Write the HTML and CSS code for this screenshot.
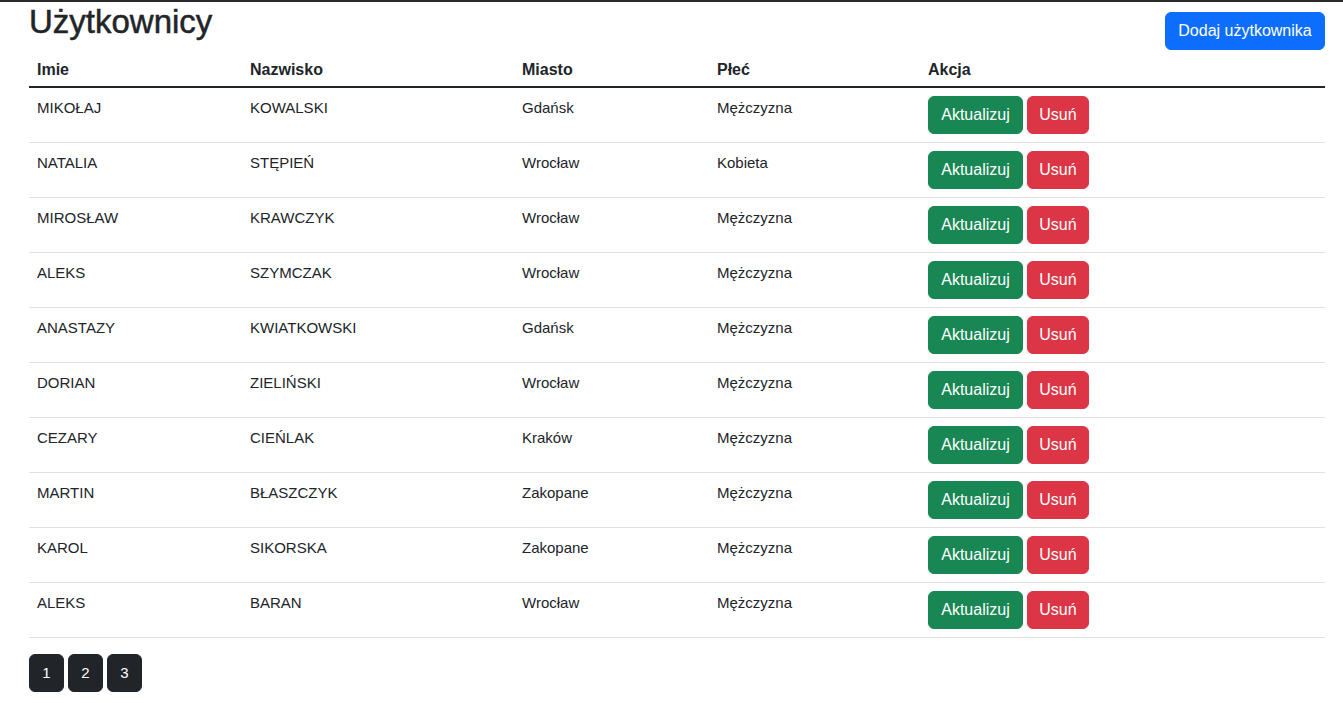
FILE: index.html
```html
<!DOCTYPE html>
<html lang="pl">
<head>
<meta charset="utf-8">
<title>Użytkownicy</title>
<link rel="stylesheet" href="styles.css">
</head>
<body>
<div class="page">
  <div class="header">
    <h1 class="title">Użytkownicy</h1>
    <button class="btn btn-primary btn-add">Dodaj użytkownika</button>
  </div>
  <table class="users">
    <colgroup>
      <col class="c1"><col class="c2"><col class="c3"><col class="c4"><col class="c5">
    </colgroup>
    <thead>
      <tr><th>Imie</th><th>Nazwisko</th><th>Miasto</th><th>Płeć</th><th>Akcja</th></tr>
    </thead>
    <tbody>
      <tr><td>MIKOŁAJ</td><td>KOWALSKI</td><td>Gdańsk</td><td>Mężczyzna</td><td><div class="actions"><button class="btn btn-success">Aktualizuj</button><button class="btn btn-danger">Usuń</button></div></td></tr>
      <tr><td>NATALIA</td><td>STĘPIEŃ</td><td>Wrocław</td><td>Kobieta</td><td><div class="actions"><button class="btn btn-success">Aktualizuj</button><button class="btn btn-danger">Usuń</button></div></td></tr>
      <tr><td>MIROSŁAW</td><td>KRAWCZYK</td><td>Wrocław</td><td>Mężczyzna</td><td><div class="actions"><button class="btn btn-success">Aktualizuj</button><button class="btn btn-danger">Usuń</button></div></td></tr>
      <tr><td>ALEKS</td><td>SZYMCZAK</td><td>Wrocław</td><td>Mężczyzna</td><td><div class="actions"><button class="btn btn-success">Aktualizuj</button><button class="btn btn-danger">Usuń</button></div></td></tr>
      <tr><td>ANASTAZY</td><td>KWIATKOWSKI</td><td>Gdańsk</td><td>Mężczyzna</td><td><div class="actions"><button class="btn btn-success">Aktualizuj</button><button class="btn btn-danger">Usuń</button></div></td></tr>
      <tr><td>DORIAN</td><td>ZIELIŃSKI</td><td>Wrocław</td><td>Mężczyzna</td><td><div class="actions"><button class="btn btn-success">Aktualizuj</button><button class="btn btn-danger">Usuń</button></div></td></tr>
      <tr><td>CEZARY</td><td>CIEŃLAK</td><td>Kraków</td><td>Mężczyzna</td><td><div class="actions"><button class="btn btn-success">Aktualizuj</button><button class="btn btn-danger">Usuń</button></div></td></tr>
      <tr><td>MARTIN</td><td>BŁASZCZYK</td><td>Zakopane</td><td>Mężczyzna</td><td><div class="actions"><button class="btn btn-success">Aktualizuj</button><button class="btn btn-danger">Usuń</button></div></td></tr>
      <tr><td>KAROL</td><td>SIKORSKA</td><td>Zakopane</td><td>Mężczyzna</td><td><div class="actions"><button class="btn btn-success">Aktualizuj</button><button class="btn btn-danger">Usuń</button></div></td></tr>
      <tr><td>ALEKS</td><td>BARAN</td><td>Wrocław</td><td>Mężczyzna</td><td><div class="actions"><button class="btn btn-success">Aktualizuj</button><button class="btn btn-danger">Usuń</button></div></td></tr>
    </tbody>
  </table>
  <div class="pagination">
    <button class="btn btn-dark page-btn">1</button>
    <button class="btn btn-dark page-btn">2</button>
    <button class="btn btn-dark page-btn">3</button>
  </div>
</div>
</body>
</html>
```
FILE: styles.css
```css
* { box-sizing: border-box; }
html, body { margin: 0; padding: 0; }
body {
  font-family: "Liberation Sans", Arial, sans-serif;
  font-size: 16px;
  line-height: 24px;
  color: #212529;
  background: #fff;
  border-top: 2px solid #2b2b2b;
}
.page {
  padding: 0 18px 0 29px;
}
.header {
  display: flex;
  justify-content: space-between;
  align-items: flex-start;
  height: 48px;
}
.title {
  margin: 0;
  padding-top: 1px;
  font-size: 33px;
  line-height: 38px;
  font-weight: 400;
  -webkit-text-stroke: 0.5px #212529;
}
.btn {
  font-family: inherit;
  font-size: 16px;
  line-height: 24px;
  padding: 6px 12px;
  border: 1px solid transparent;
  border-radius: 6px;
  color: #fff;
  cursor: pointer;
}
.btn-primary { background: #0d6efd; border-color: #0d6efd; }
.btn-success { background: #198754; border-color: #198754; }
.btn-danger { background: #dc3545; border-color: #dc3545; }
.btn-dark { background: #212529; border-color: #212529; }
.btn-add { margin-top: 10px; height: 38px; width: 160px; padding: 6px 0; }
.users {
  width: 100%;
  border-collapse: collapse;
  table-layout: fixed;
}
.c1 { width: 213px; }
.c2 { width: 272px; }
.c3 { width: 195px; }
.c4 { width: 211px; }
.c5 { width: 405px; }
.users th {
  text-align: left;
  font-weight: 700;
  padding: 8px 8px 4px;
  border-bottom: 2px solid #212529;
  vertical-align: top;
}
.users td {
  padding: 8px 8px;
  vertical-align: top;
  border-bottom: 1px solid #dee2e6;
  font-size: 15px;
}
.actions {
  display: flex;
  gap: 4px;
}
.actions .btn { height: 38px; }
.actions .btn-success { width: 95px; padding: 6px 0; }
.actions .btn-danger { width: 62px; padding: 6px 0; }
.pagination {
  display: flex;
  gap: 4px;
  margin-top: 16px;
}
.page-btn {
  width: 35px;
  height: 38px;
  padding: 6px 0;
  font-size: 15px;
}
```
